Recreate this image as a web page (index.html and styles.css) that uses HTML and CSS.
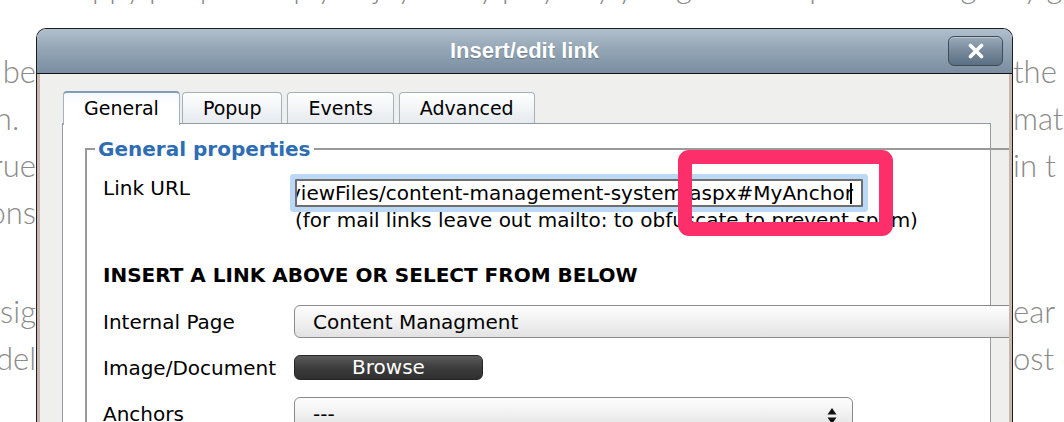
FILE: index.html
```html
<!DOCTYPE html>
<html lang="en">
<head>
    <meta charset="UTF-8">
    <meta name="viewport" content="width=device-width, initial-scale=1.0">
    <title>Insert/edit link</title>
    <link rel="stylesheet" href="styles.css">
</head>
<body>

    <!-- page text behind the dialog -->
    <div class="backdrop">
        <p class="backdrop-top">happy people simply enjoy every play day you get to keep in the long stay going</p>
        <div class="bg-para">
            <div class="bg-line"><span class="bg-left">never be</span><span class="bg-right">the</span></div>
            <div class="bg-line"><span class="bg-left">design.&nbsp;&nbsp;</span><span class="bg-right">mat</span></div>
            <div class="bg-line"><span class="bg-left">true</span><span class="bg-right">in t</span></div>
            <div class="bg-line"><span class="bg-left">options</span><span class="bg-right"></span></div>
        </div>
        <div class="bg-para">
            <div class="bg-line"><span class="bg-left">desig</span><span class="bg-right">ear</span></div>
            <div class="bg-line"><span class="bg-left">model</span><span class="bg-right">ost c</span></div>
        </div>
    </div>

    <div class="dialog">
        <div class="dialog-title">
            <h1>Insert/edit link</h1>
            <button class="close-btn" title="Close">
                <svg width="18" height="16" viewBox="0 0 18 16">
                    <path d="M3.5 2.5 L14.5 13.5 M14.5 2.5 L3.5 13.5" stroke="#fff" stroke-width="3.6" stroke-linecap="round"/>
                </svg>
            </button>
        </div>

        <div class="dialog-body">
            <div class="tabs">
                <span class="tab active">General</span>
                <span class="tab">Popup</span>
                <span class="tab">Events</span>
                <span class="tab">Advanced</span>
            </div>

            <div class="panel">
                <fieldset class="props">
                    <legend>General properties</legend>

                    <div class="url-row">
                        <span class="field-label">Link URL</span>
                        <div class="url-col">
                            <div class="url-input"><span class="url-text">viewFiles/content-management-system.aspx#MyAnchor</span><span class="caret"></span></div>
                            <div class="hint">(for mail links leave out mailto: to obfuscate to prevent spam)</div>
                        </div>
                    </div>

                    <h3 class="section-title">INSERT A LINK ABOVE OR SELECT FROM BELOW</h3>

                    <div class="field-row">
                        <span class="field-label">Internal Page</span>
                        <div class="select select-wide">Content Managment</div>
                    </div>

                    <div class="field-row">
                        <span class="field-label">Image/Document</span>
                        <button class="browse-btn">Browse</button>
                    </div>

                    <div class="field-row">
                        <span class="field-label">Anchors</span>
                        <div class="select select-anchors">
                            <span>---</span>
                            <svg class="arrows" width="10" height="18" viewBox="0 0 10 18">
                                <path d="M5 1 L9.5 7.5 L0.5 7.5 Z M0.5 10.5 L9.5 10.5 L5 17 Z" fill="#111"/>
                            </svg>
                        </div>
                    </div>
                </fieldset>
            </div>
        </div>
    </div>

    <!-- annotation drawn over the screenshot -->
    <div class="annotation"></div>

</body>
</html>
```

FILE: styles.css
```css
body { margin: 0; width: 1064px; height: 422px; overflow: hidden; position: relative; background: #fff; font-family: "DejaVu Sans", Verdana, sans-serif; color: #000; }

/* background page */
.backdrop { display: flow-root; font-family: Lato, "DejaVu Sans", sans-serif; font-weight: 300; font-size: 31px; line-height: 47px; color: #8a8a8a; }
.backdrop-top { margin: -37px 0 38px; height: 47px; padding-left: 60px; white-space: nowrap; overflow: hidden; }
.bg-para + .bg-para { margin-top: 52px; }
.bg-line { display: flex; justify-content: space-between; height: 47px; }
.bg-left { width: 36px; display: flex; justify-content: flex-end; overflow: hidden; white-space: nowrap; }
.bg-right { width: 51px; overflow: hidden; white-space: nowrap; }

/* dialog window */
.dialog { position: absolute; left: 36px; top: 28px; width: 977px; height: 420px; box-sizing: border-box; border: 1px solid #1c1c1c; border-bottom: 0; border-radius: 10px 10px 0 0; overflow: hidden; display: flex; flex-direction: column; }
.dialog-title { flex: none; height: 44px; display: grid; grid-template-columns: 1fr auto 1fr; align-items: center; background: linear-gradient(#b0bfcc, #94a6b6 45%, #7a8ea1); border-bottom: 1px solid #111; }
.dialog-title h1 { grid-column: 2; margin: 0; font: bold 22px "Liberation Sans", Arial, sans-serif; color: #fff; text-shadow: 0 1px 1px rgba(0, 0, 0, 0.25); }
.close-btn { grid-column: 3; justify-self: end; margin-right: 9px; width: 55px; height: 30px; padding: 0; display: flex; align-items: center; justify-content: center; border: 1px solid #3e4b58; border-radius: 6px; background: linear-gradient(#9aabb9, #768a9c 50%, #5b6f82); box-shadow: inset 0 1px 0 rgba(255, 255, 255, 0.35); cursor: pointer; }

.dialog-body { flex: 1; background: #efefed; border-left: 3px solid #c9b6ae; border-right: 3px solid #c9b6ae; padding-top: 17px; overflow: hidden; }

/* tabs */
.tabs { display: flex; align-items: flex-end; gap: 5px; height: 32px; margin-left: 23px; }
.tab { height: 31px; box-sizing: border-box; padding: 0 20px; border: 1px solid #a3b1be; border-bottom: 0; border-radius: 4px 4px 0 0; background: linear-gradient(#fff, #e6eaee); font-size: 19px; line-height: 30px; }
.tab.active { position: relative; z-index: 1; height: 34px; margin-bottom: -2px; margin-right: -3px; border-top: 2px solid #7f9cb8; background: linear-gradient(#f7f9fb, #fff 40%); }

.panel { width: 929px; height: 400px; box-sizing: border-box; margin-left: 22px; border: 1px solid #919ca5; background: #fff; padding-top: 14px; }

/* form */
.props { width: 940px; height: 420px; box-sizing: border-box; margin: 0 0 0 22px; border: 2px solid #9a9a9a; padding: 0 0 0 16px; font-size: 20px; }
.props legend { margin-left: -8px; padding: 0 3px; font-size: 20px; font-weight: bold; line-height: 22px; color: #2f6db3; }

.field-label { width: 191px; flex: none; line-height: 24px; }
.url-row { display: flex; align-items: flex-start; margin-top: 16px; }
.url-col { margin-left: 1px; }
.url-input { width: 568px; height: 28px; box-sizing: border-box; margin-top: 3px; border: 2px solid #6e6e6e; border-radius: 1px; box-shadow: 0 0 0 5px #bbd8f6; background: #fff; overflow: hidden; white-space: nowrap; line-height: 24px; }
.url-text { margin-left: -8px; }
.caret { display: inline-block; width: 2px; height: 21px; margin-left: -3px; background: #000; vertical-align: -4px; }
.hint { margin-top: 1px; line-height: 24px; }

.section-title { margin: 31px 0 0; font-size: 20px; font-weight: bold; line-height: 24px; }

.field-row { display: flex; align-items: center; margin-top: 18px; }
.field-row + .field-row { margin-top: 17px; }

.select { height: 33px; box-sizing: border-box; flex: none; display: flex; align-items: center; padding-left: 18px; border: 1px solid #8a8a8a; border-radius: 6px; background: linear-gradient(#fdfdfd, #f1f1f1 50%, #e2e2e2); }
.select-wide { width: 800px; }
.select-anchors { width: 559px; justify-content: space-between; padding-right: 15px; }
.arrows { margin-top: 4px; }

.browse-btn { width: 189px; height: 25px; padding: 0; border: 1px solid #262626; border-radius: 6px; background: linear-gradient(#5c5c5c, #3d3d3d 50%, #2f2f2f); color: #fff; font: 20px "DejaVu Sans", Verdana, sans-serif; line-height: 23px; cursor: pointer; }

/* pink highlight */
.annotation { position: absolute; left: 678px; top: 150px; width: 215px; height: 86px; box-sizing: border-box; border: 14px solid #fc2f6a; border-radius: 11px; pointer-events: none; }
```
